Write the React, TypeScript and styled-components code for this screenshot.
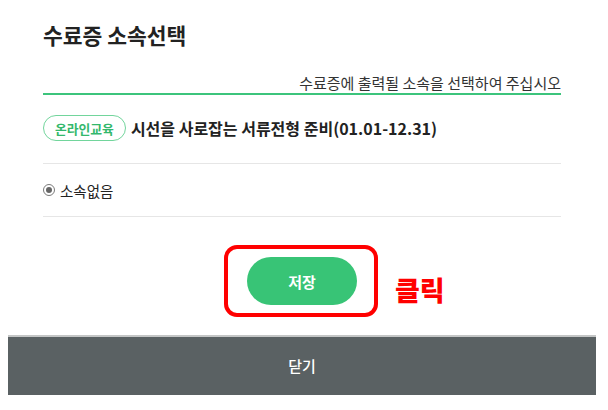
import React from 'react';
import styled, { createGlobalStyle } from 'styled-components';

const GlobalStyle = createGlobalStyle`
  body {
    margin: 0;
    background: #ffffff;
    font-family: "Noto Sans CJK KR", "Noto Sans", sans-serif;
    color: #222222;
  }
`;

const Modal = styled.div`
  width: 588px;
  margin-left: 8px;
  background: #ffffff;
`;

const Body = styled.div`
  padding: 20px 35px 30px;
`;

const Title = styled.h2`
  margin: 0;
  font-size: 21.5px;
  font-weight: 700;
  line-height: 30px;
  color: #222222;
`;

const Guide = styled.p`
  margin: 23px 0 0;
  border-bottom: 2px solid #3cc47c;
  text-align: right;
  font-size: 15px;
  line-height: 20px;
  color: #333333;
`;

const CourseRow = styled.div`
  display: flex;
  align-items: center;
  gap: 5px;
  padding: 20px 0 22px;
  border-bottom: 1px solid #e6e6e6;
`;

const Badge = styled.span`
  display: inline-flex;
  align-items: center;
  height: 26px;
  padding: 0 11px;
  border: 1px solid #72d59c;
  border-radius: 13px;
  box-sizing: border-box;
  font-size: 12.8px;
  font-weight: 700;
  color: #33b86c;
`;

const CourseName = styled.span`
  font-size: 16px;
  font-weight: 700;
  color: #222222;
`;

const OptionRow = styled.label`
  display: flex;
  align-items: center;
  gap: 5px;
  height: 52px;
  border-bottom: 1px solid #e6e6e6;
  font-size: 14.5px;
  color: #222222;
`;

const Radio = styled.span`
  width: 12px;
  height: 12px;
  border-radius: 50%;
  border: 1px solid #7a7a7a;
  box-sizing: border-box;
  display: flex;
  align-items: center;
  justify-content: center;

  &::after {
    content: '';
    width: 6px;
    height: 6px;
    border-radius: 50%;
    background: #666666;
  }
`;

const Actions = styled.div`
  display: flex;
  justify-content: center;
  margin-top: 40px;
`;

const SaveWrap = styled.div`
  position: relative;
`;

const SaveButton = styled.button`
  width: 110px;
  height: 48px;
  border: none;
  border-radius: 24px;
  background: #38c476;
  color: #ffffff;
  font-family: inherit;
  font-size: 15px;
  font-weight: 700;
`;

const Highlight = styled.span`
  position: absolute;
  left: -23px;
  top: -12px;
  width: 154px;
  height: 72px;
  border: 4px solid #ff0000;
  border-radius: 13px;
  box-sizing: border-box;
`;

const Note = styled.span`
  position: absolute;
  left: 148px;
  top: 13px;
  font-size: 27px;
  font-weight: 900;
  color: #ff0000;
  white-space: nowrap;
`;

const CloseBar = styled.button`
  display: block;
  width: 100%;
  height: 60px;
  padding-bottom: 3px;
  border: none;
  border-top: 2px solid #c4c6c6;
  background: #5a6163;
  color: #ffffff;
  font-family: inherit;
  font-size: 15px;
  font-weight: 500;
`;

const App = (): JSX.Element => (
  <>
    <GlobalStyle />
    <Modal>
      <Body>
        <Title>수료증 소속선택</Title>
        <Guide>수료증에 출력될 소속을 선택하여 주십시오</Guide>
        <CourseRow>
          <Badge>온라인교육</Badge>
          <CourseName>시선을 사로잡는 서류전형 준비(01.01-12.31)</CourseName>
        </CourseRow>
        <OptionRow>
          <Radio />
          소속없음
        </OptionRow>
        <Actions>
          <SaveWrap>
            <SaveButton>저장</SaveButton>
            <Highlight />
            <Note>클릭</Note>
          </SaveWrap>
        </Actions>
      </Body>
      <CloseBar>닫기</CloseBar>
    </Modal>
  </>
);

export default App;
